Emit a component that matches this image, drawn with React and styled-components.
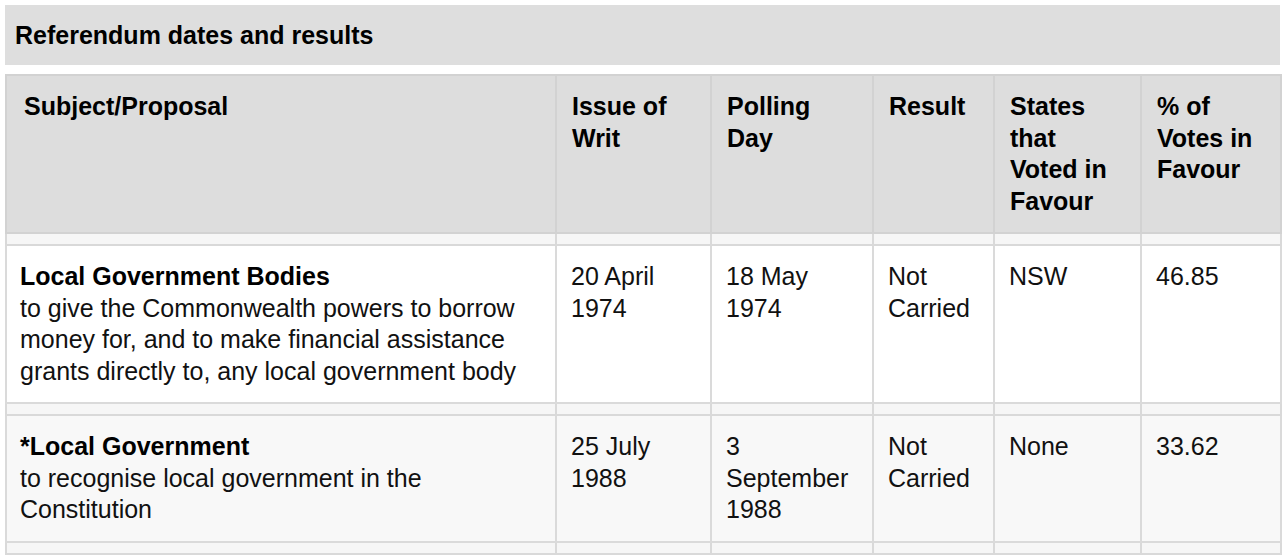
import styled, { createGlobalStyle } from 'styled-components';

const GlobalStyle = createGlobalStyle`
  body {
    margin: 0;
    background: #ffffff;
    font-family: "Liberation Sans", Arial, sans-serif;
    color: #111;
  }
`;

const columns = [
  { label: 'Subject/Proposal', width: 550 },
  { label: 'Issue of Writ', width: 155 },
  { label: 'Polling Day', width: 162 },
  { label: 'Result', width: 121 },
  { label: 'States that Voted in Favour', width: 147 },
  { label: '% of Votes in Favour', width: 140 },
];

const rows = [
  {
    title: 'Local Government Bodies',
    text: 'to give the Commonwealth powers to borrow money for, and to make financial assistance grants directly to, any local government body',
    writ: '20 April 1974',
    polling: '18 May 1974',
    result: 'Not Carried',
    states: 'NSW',
    votes: '46.85',
  },
  {
    title: '*Local Government',
    text: 'to recognise local government in the Constitution',
    writ: '25 July 1988',
    polling: '3 September 1988',
    result: 'Not Carried',
    states: 'None',
    votes: '33.62',
    shaded: true,
  },
];

function App() {
  return (
    <Page>
      <GlobalStyle />
      <Caption>Referendum dates and results</Caption>
      <Table>
        <colgroup>
          {columns.map((c) => (
            <col key={c.label} style={{ width: c.width }} />
          ))}
        </colgroup>
        <thead>
          <tr>
            {columns.map((c) => (
              <HeadCell key={c.label}>{c.label}</HeadCell>
            ))}
          </tr>
        </thead>
        <tbody>
          {rows.map((r) => (
            <RowGroup key={r.title} row={r} />
          ))}
          <Spacer>
            {columns.map((c) => (
              <SpacerCell key={c.label} />
            ))}
          </Spacer>
        </tbody>
      </Table>
    </Page>
  );
}

function RowGroup({ row }) {
  return (
    <>
      <Spacer>
        {columns.map((c) => (
          <SpacerCell key={c.label} />
        ))}
      </Spacer>
      <Row $shaded={row.shaded}>
        <Cell>
          <Subject>{row.title}</Subject>
          {row.text}
        </Cell>
        <Cell>{row.writ}</Cell>
        <Cell>{row.polling}</Cell>
        <Cell>{row.result}</Cell>
        <Cell>{row.states}</Cell>
        <Cell>{row.votes}</Cell>
      </Row>
    </>
  );
}

export default App;

/* Styled Components */
const Page = styled.div`
  padding: 5px 5px 0 5px;
  display: flex;
  flex-direction: column;
  gap: 9px;
`;

const Caption = styled.div`
  height: 60px;
  background: #dedede;
  display: flex;
  align-items: center;
  padding-left: 10px;
  font-size: 25px;
  font-weight: bold;
  color: #000;
`;

const Table = styled.table`
  width: 1275px;
  border-collapse: collapse;
  table-layout: fixed;
  font-size: 25px;
  line-height: 31.5px;
`;

const HeadCell = styled.th`
  background: #dddddd;
  border: 2px solid #d2d2d2;
  text-align: left;
  vertical-align: top;
  padding: 15px 15px 15px 15px;
  font-weight: bold;
  color: #000;
  height: 126px;
  &:first-child {
    padding-left: 17px;
  }
`;

const Spacer = styled.tr`
  height: 12px;
`;

const SpacerCell = styled.td`
  padding: 0;
  background: #f6f6f6;
  border: 2px solid #d9d9d9;
  height: 8px;
`;

const Row = styled.tr`
  background: ${(p) => (p.$shaded ? '#f8f8f8' : '#ffffff')};
`;

const Cell = styled.td`
  border: 2px solid #dadada;
  vertical-align: top;
  padding: 15px 15px 15px 14px;
  color: #111;
  &:first-child {
    padding-left: 13px;
  }
`;

const Subject = styled.div`
  font-weight: bold;
  color: #000;
`;
